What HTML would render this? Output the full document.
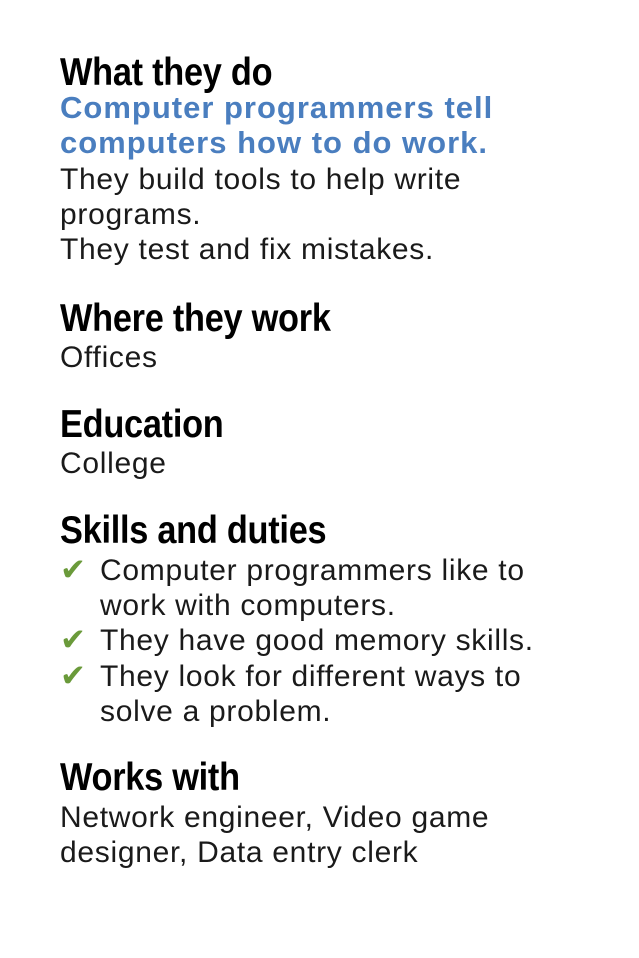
<!DOCTYPE html>
<html><head><meta charset="utf-8"><style>
html,body{margin:0;padding:0;background:#fff;}
body{width:639px;height:958px;position:relative;overflow:hidden;}
div{position:absolute;left:60px;white-space:nowrap;}
.h{font-family:"Liberation Sans Narrow","Liberation Sans",sans-serif;font-weight:bold;font-size:39px;line-height:40px;color:#000;transform:scaleX(0.88);transform-origin:0 0;letter-spacing:-0.3px;}
.b{font-family:"Liberation Sans",sans-serif;font-weight:bold;font-size:31px;line-height:35px;color:#4a7ebf;letter-spacing:1px;}
.t{font-family:"Liberation Sans",sans-serif;font-size:30px;line-height:35px;color:#1a1a1a;letter-spacing:0.7px;}
.c{left:60px;font-family:"DejaVu Sans",sans-serif;font-size:31px;line-height:35px;color:#6a9a3a;font-weight:bold;}
.i{left:100px;}
</style></head><body>
<div class="h" style="top:53px">What they do</div>
<div class="b" style="top:90px">Computer programmers tell</div>
<div class="b" style="top:125px">computers how to do work.</div>
<div class="t" style="top:162px">They build tools to help write</div>
<div class="t" style="top:197px">programs.</div>
<div class="t" style="top:232px">They test and fix mistakes.</div>

<div class="h" style="top:299px">Where they work</div>
<div class="t" style="top:340px">Offices</div>

<div class="h" style="top:405px">Education</div>
<div class="t" style="top:446px">College</div>

<div class="h" style="top:511px">Skills and duties</div>
<div class="c" style="top:553px">✔</div>
<div class="t i" style="top:553px">Computer programmers like to</div>
<div class="t i" style="top:588px">work with computers.</div>
<div class="c" style="top:623px">✔</div>
<div class="t i" style="top:623px">They have good memory skills.</div>
<div class="c" style="top:659px">✔</div>
<div class="t i" style="top:659px">They look for different ways to</div>
<div class="t i" style="top:694px">solve a problem.</div>

<div class="h" style="top:758px">Works with</div>
<div class="t" style="top:800px">Network engineer, Video game</div>
<div class="t" style="top:835px">designer, Data entry clerk</div>
</body></html>
